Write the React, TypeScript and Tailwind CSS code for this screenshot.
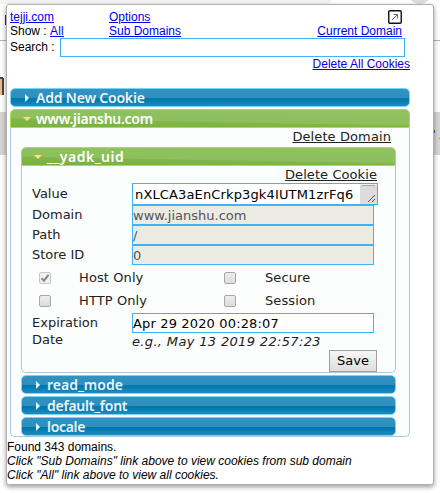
import type { ReactNode } from "react";

const fieldBase = "block h-5 w-[242px] border border-[#3cb4f7] px-0 text-[13px] leading-[19px]";

function Link({ children, className = "" }: { children: ReactNode; className?: string }) {
  return (
    <a href="#" className={`text-[#0000ee] underline ${className}`}>
      {children}
    </a>
  );
}

function Header({ label, open = false, fit = "" }: { label: string; open?: boolean; fit?: string }) {
  const skin = open
    ? "border-[#acdd4a] bg-[linear-gradient(181deg,#92c263_0%,#8dbf5c_63%,#7fb647_67%,#7ab23f_100%)] text-white rounded-t-[5px]"
    : "border-[#77d5f7] bg-[linear-gradient(#3292c1_0%,#2e90bf_50%,#0078ae_53%,#0379af_65%,#218cbe_100%)] text-[#eaf5f7] rounded-[5px]";
  return (
    <h3 className={`flex h-[19px] items-center border font-['Noto_Sans',sans-serif] text-[14px] leading-[17px] font-semibold ${skin}`}>
      <span className="flex w-[25px] shrink-0 justify-center pl-[6px]">
        {open ? (
          <svg width="8" height="4" viewBox="0 0 8 4" className="fill-[#fce07a]">
            <path d="M0 0h8L4 4z" />
          </svg>
        ) : (
          <svg width="4" height="8" viewBox="0 0 4 8" className="fill-[#e0fdff]">
            <path d="M0 0v8l4-4z" />
          </svg>
        )}
      </span>
      <span className={`whitespace-nowrap ${fit}`}>{label}</span>
    </h3>
  );
}

function Check({ checked = false }: { checked?: boolean }) {
  return (
    <span
      className={`flex size-3 shrink-0 items-center justify-center rounded-[2px] border ${
        checked ? "border-[#c8c8c8] bg-[#f0f0f0]" : "border-[#a8a8a8] bg-linear-to-b from-[#ededed] to-[#dcdcdc]"
      }`}
    >
      {checked && (
        <svg width="10" height="10" viewBox="0 0 10 10" fill="none" stroke="#888" strokeWidth="2">
          <path d="M1.5 5.2 4 7.7 8.5 1.8" />
        </svg>
      )}
    </span>
  );
}

function ReadOnlyRow({ label, value }: { label: string; value: string }) {
  return (
    <div className="flex h-5">
      <span className="w-[100px] leading-[20px]">{label}</span>
      <div className={`${fieldBase} bg-[#ebebe4] text-[#545454]`}>{value}</div>
    </div>
  );
}

function Backdrop() {
  return (
    <div className="absolute inset-0 overflow-hidden bg-white">
      <div className="absolute top-[-10px] left-[-10px] h-[14px] w-[343px] rounded-r-full bg-[#f1f3f4]" />
      <div className="absolute top-[-21px] left-[407px] size-[25px] rounded-full bg-[#dedede]" />
      <div className="absolute top-10 h-px w-full bg-[#b0b0b0]" />
      <div className="absolute top-[112px] h-[43px] w-full bg-[#d5d5d5]" />
      <div className="absolute top-[15px] left-[5px] h-[10px] w-1 bg-[#333]" />
      <div className="absolute top-[77px] left-0 h-[18px] w-[3px] bg-[#eeb98a]" />
      <div className="absolute top-[77px] left-0 h-[2px] w-[3px] bg-[#444]" />
      <div className="absolute top-[78px] left-[2px] h-[17px] w-[2px] bg-[#444]" />
      <div className="absolute top-[130px] left-[433px] h-[3px] w-[2px] bg-[#2e6290]" />
      <div className="absolute top-[138px] left-[439px] h-px w-px bg-[#c58b40]" />
    </div>
  );
}

export default function App() {
  return (
    <div className="relative h-[493px] w-[440px] overflow-hidden font-['Liberation_Sans',Arial,sans-serif] text-[12px] leading-[14px] text-black">
      <Backdrop />
      <main className="relative ml-[6px] h-[485px] w-[428px] pt-1">
        <div className="h-[481px] rounded-[3px] border border-[#b0b0b0] bg-white pt-[5px] shadow-[0_2px_5px_rgba(0,0,0,0.4)]">
          <div className="ml-[3px] w-[400px]">
            <div className="flex h-[14px]">
              <span className="w-[99px]"><Link>tejji.com</Link></span>
              <Link>Options</Link>
              <svg className="mr-2 ml-auto" width="14" height="14" viewBox="0 0 14 14" fill="none">
                <rect x="0.75" y="0.75" width="12.5" height="12.5" rx="1.2" stroke="#111" strokeWidth="1.4" />
                <path d="M4 10 9.5 4.5M5.5 4.5h4v4" stroke="#555" strokeWidth="0.9" />
              </svg>
            </div>
            <div className="flex h-[14px]">
              <span className="w-[99px] whitespace-pre">Show : <Link className="tracking-[0.2px]">All</Link></span>
              <Link>Sub Domains</Link>
              <Link className="mr-2 ml-auto">Current Domain</Link>
            </div>
            <div className="flex h-[19px]">
              <span className="w-[50px] pt-[2px]">Search :</span>
              <div className="h-[19px] w-[345px] border border-[#3cb4f7]" />
            </div>
            <div className="flex h-[31px] justify-end"><Link>Delete All Cookies</Link></div>

            <Header label="Add New Cookie" fit="tracking-[-0.2px]" />
            <div className="h-[2px]" />
            <Header label="www.jianshu.com" open fit="tracking-[-0.27px]" />
            <section className="h-[309px] rounded-b-[5px] border border-t-0 border-[#a6c9e2] bg-[#fcfdfd] px-[10px] font-['DejaVu_Sans',Verdana,sans-serif] text-[13px] text-[#222]">
              <div className="flex h-[19px] justify-end pr-[8px]">
                <a href="#" className="leading-[18px] tracking-[0.1px] underline">Delete Domain</a>
              </div>
              <div className="w-[375px]">
                <Header label="__yadk_uid" open fit="tracking-[0.5px]" />
                <div className="h-[207px] rounded-b-[5px] border border-t-0 border-[#a6c9e2] bg-[#fcfdfd] pl-[10px]">
                  <div className="flex h-[17px] justify-end pr-[18px]">
                    <a href="#" className="leading-[18px] tracking-[0.08px] underline">Delete Cookie</a>
                  </div>
                  <div className="flex h-[22px]">
                    <span className="w-[100px] leading-[21px]">Value</span>
                    <div className="flex w-[246px] border border-[#3cb4f7] bg-white pl-[2px] text-black">
                      <span className="grow leading-[21px] tracking-[0.14px] whitespace-nowrap">nXLCA3aEnCrkp3gk4IUTM1zrFq6</span>
                      <svg className="h-5 w-[17px] shrink-0 bg-[#dcdcdc]" viewBox="0 0 17 20" fill="none">
                        <path d="M0 .5h17" stroke="#f1f1f1" />
                        <path d="M2 1.5h13" stroke="#aaa" />
                        <path d="m8 18 7-7m-3 7 3-3" stroke="#555" />
                      </svg>
                    </div>
                  </div>
                  <ReadOnlyRow label="Domain" value="www.jianshu.com" />
                  <ReadOnlyRow label="Path" value="/" />
                  <ReadOnlyRow label="Store ID" value="0" />
                  <div className="grid h-12 grid-cols-[185px_1fr] grid-rows-[23px_23px] pt-px pl-[7px] tracking-[0.1px]">
                    <div className="flex items-center gap-7"><Check checked />Host Only</div>
                    <div className="flex items-center gap-[29px]"><Check />Secure</div>
                    <div className="flex items-center gap-7"><Check />HTTP Only</div>
                    <div className="flex items-center gap-[29px]"><Check />Session</div>
                  </div>
                  <div className="flex h-[37px]">
                    <span className="w-[100px] pt-px pr-5 leading-[17px]">Expiration Date</span>
                    <div>
                      <div className={`${fieldBase} bg-white tracking-[0.15px] text-black`}>Apr 29 2020 00:28:07</div>
                      <em className="block leading-[18px] tracking-[0.34px] whitespace-nowrap">e.g., May 13 2019 22:57:23</em>
                    </div>
                  </div>
                  <div className="flex justify-end pr-[18px]">
                    <button className="h-[22px] w-12 border border-[#a0a0a0] bg-linear-to-b from-[#f6f6f6] to-[#dedede] text-black">Save</button>
                  </div>
                </div>
                <div className="flex flex-col gap-[2px] pt-[2px]">
                  <Header label="read_mode" />
                  <Header label="default_font" fit="tracking-[-0.25px]" />
                  <Header label="locale" fit="tracking-[-0.3px]" />
                </div>
              </div>
            </section>
          </div>
          <footer className="pt-[3px]">
            <p>Found 343 domains.</p>
            <p className="italic">Click "Sub Domains" link above to view cookies from sub domain</p>
            <p className="italic">Click "All" link above to view all cookies.</p>
          </footer>
        </div>
      </main>
    </div>
  );
}
